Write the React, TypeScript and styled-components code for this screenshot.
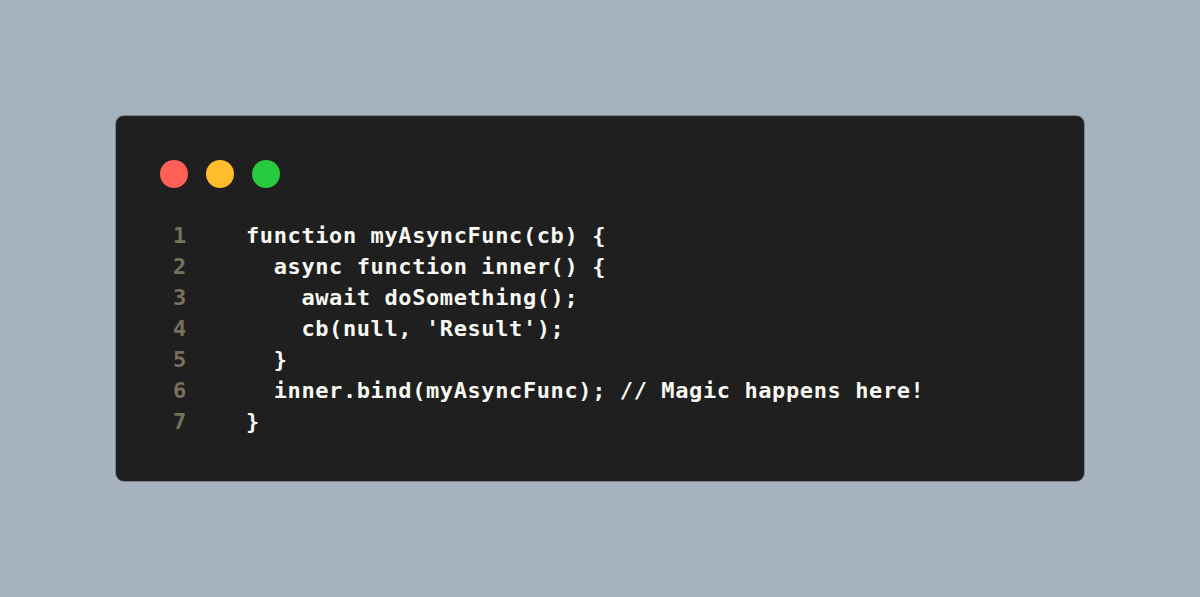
import React from "react";
import styled, { createGlobalStyle } from "styled-components";

const GlobalStyle = createGlobalStyle`
  html, body {
    margin: 0;
    padding: 0;
    background: #a6b3bf;
  }
  #root {
    min-height: 100vh;
  }
`;

const Page = styled.div`
  min-height: 100vh;
  display: flex;
  align-items: center;
  justify-content: center;
  background: #a6b3bf;
`;

const Window = styled.div`
  width: 968px;
  box-sizing: border-box;
  padding: 44px;
  background: #1f1f1f;
  border-radius: 8px;
  box-shadow: 0 0 0 1px rgba(70, 76, 82, 0.45);
  display: flex;
  flex-direction: column;
  gap: 32px;
`;

const Lights = styled.div`
  display: flex;
  gap: 18px;
`;

const Light = styled.span<{ $color: string }>`
  width: 28px;
  height: 28px;
  border-radius: 50%;
  background: ${(p) => p.$color};
`;

const Code = styled.div`
  display: flex;
  flex-direction: column;
  font-family: "DejaVu Sans Mono", "Liberation Mono", monospace;
  font-weight: bold;
  font-size: 22px;
  letter-spacing: 0.6px;
  line-height: 31px;
`;

const Line = styled.div`
  display: grid;
  grid-template-columns: 40px 1fr;
  column-gap: 46px;
`;

const LineNo = styled.span`
  color: #77725e;
  text-align: center;
`;

const Text = styled.span`
  color: #f8f8f2;
  white-space: pre;
`;

const lines = [
  "function myAsyncFunc(cb) {",
  "  async function inner() {",
  "    await doSomething();",
  "    cb(null, 'Result');",
  "  }",
  "  inner.bind(myAsyncFunc); // Magic happens here!",
  "}",
];

export default function App() {
  return (
    <>
      <GlobalStyle />
      <Page>
        <Window>
          <Lights>
            <Light $color="#ff5f56" />
            <Light $color="#ffbd2e" />
            <Light $color="#27c93f" />
          </Lights>
          <Code>
            {lines.map((l, i) => (
              <Line key={i}>
                <LineNo>{i + 1}</LineNo>
                <Text>{l}</Text>
              </Line>
            ))}
          </Code>
        </Window>
      </Page>
    </>
  );
}
